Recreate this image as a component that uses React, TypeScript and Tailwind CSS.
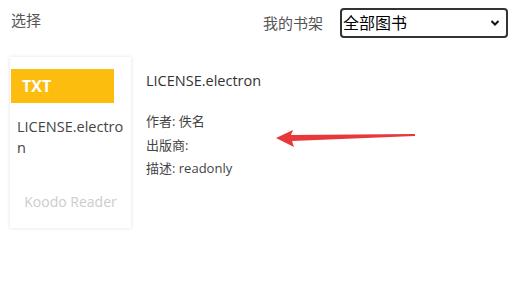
import React from "react";

const font = { fontFamily: '"Open Sans", "Noto Sans CJK SC", sans-serif' };

export default function App() {
  return (
    <div className="w-[525px] h-[282px] bg-white relative overflow-hidden" style={font}>
      <div className="flex items-start justify-between h-[57px]">
        <div className="pl-[11px] pt-[10px] text-[15px] text-[#555] leading-[20px]">选择</div>
        <div className="flex items-center pt-[8px] pr-[17px]">
          <span className="text-[15px] text-[#555] mr-[17px]">我的书架</span>
          <div className="w-[168px] h-[30px] border-2 border-[#333] rounded-[4px] flex items-center justify-between pl-[1px] pr-[6px]">
            <span className="text-[16px] text-black leading-none">全部图书</span>
            <svg width="10" height="8" viewBox="0 0 10 8">
              <path d="M1.5 2 L5 5.5 L8.5 2" stroke="#111" strokeWidth="2" fill="none" />
            </svg>
          </div>
        </div>
      </div>
      <div className="flex">
        <div className="ml-[10px] w-[121px] h-[171px] bg-white shadow-[0_0_4px_rgba(0,0,0,0.12)] flex flex-col">
          <div className="mt-[12px] ml-[1px] w-[103px] h-[34px] bg-[#fcbd0f] flex items-center pl-[11px]">
            <span className="text-white font-bold text-[16px]">TXT</span>
          </div>
          <div className="mt-[13px] pl-[7px] pr-[4px] text-[14.5px] text-[#444] leading-[21px] break-all">
            LICENSE.electron
          </div>
          <div className="mt-auto mb-[16px] text-center text-[14px] text-[#ccc]">Koodo Reader</div>
        </div>
        <div className="ml-[15px] pt-[14px]">
          <div className="text-[14.5px] text-[#333] font-medium leading-[20px]">LICENSE.electron</div>
          <div className="mt-[19px] text-[13px] text-[#444] leading-[23.5px]">
            <div>作者: 佚名</div>
            <div>出版商:</div>
            <div>描述: readonly</div>
          </div>
        </div>
      </div>
      <svg className="absolute left-[274px] top-[126px]" width="145" height="24" viewBox="0 0 145 24">
        <polygon points="2,12 19,4 17,9 141,8 141,10 18,15 20,21" fill="#e8393a" />
      </svg>
    </div>
  );
}
